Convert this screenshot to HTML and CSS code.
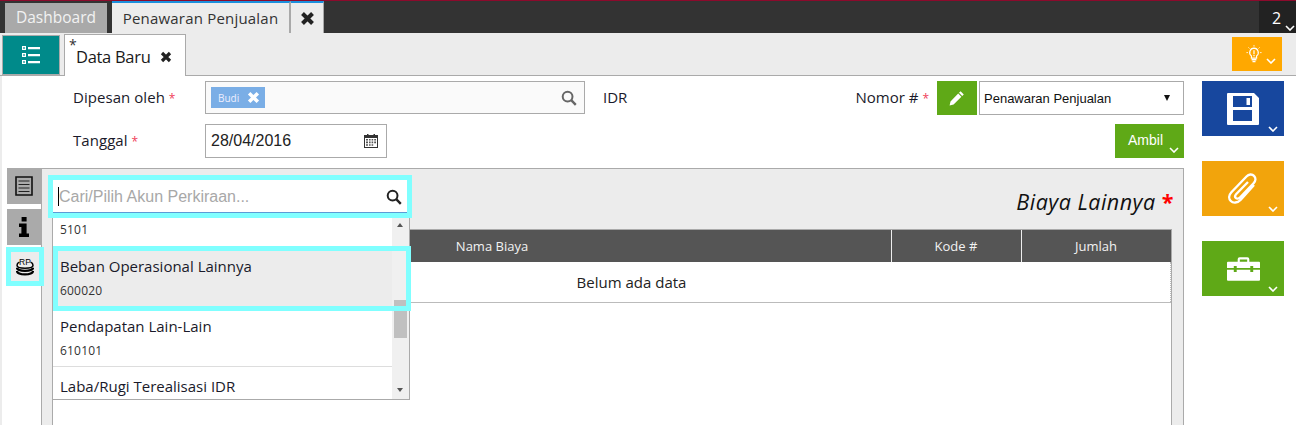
FILE: index.html
```html
<!DOCTYPE html>
<html lang="id">
<head>
<meta charset="utf-8">
<title>Penawaran Penjualan</title>
<link rel="stylesheet" href="styles.css">
</head>
<body>
<svg class="defs" aria-hidden="true">
  <symbol id="i-x" viewBox="0 0 12 12"><path d="M2 2l8 8M10 2l-8 8" fill="none" stroke="currentColor" stroke-width="3.2"/></symbol>
  <symbol id="i-chev" viewBox="0 0 10 6"><path d="M1 1l4 4 4-4" fill="none" stroke="currentColor" stroke-width="1.6"/></symbol>
  <symbol id="i-search" viewBox="0 0 16 16"><circle cx="6.6" cy="6.6" r="4.9" fill="none" stroke="currentColor" stroke-width="2"/><path d="M10.2 10.2l4.6 4.6" fill="none" stroke="currentColor" stroke-width="2.4"/></symbol>
</svg>
<div class="app">
  <header class="topbar">
    <div class="tab tab-dash">Dashboard</div>
    <div class="tab tab-open">Penawaran Penjualan</div>
    <div class="tab tab-close"><svg class="ic-x ic-x-lg"><use href="#i-x"/></svg></div>
    <div class="count">2<svg class="chev"><use href="#i-chev"/></svg></div>
  </header>
  <nav class="subbar">
    <button class="list-btn" type="button">
      <svg width="18" height="18" viewBox="0 0 18 18"><path d="M0 0h4v4H0zM0 7h4v4H0zM0 14h4v4H0z" fill="#fff"/><path d="M1.2 1.2h1.6v1.6H1.2zM1.2 8.2h1.6v1.6H1.2zM1.2 15.2h1.6v1.6H1.2z" fill="#008a8a"/><path d="M6 1h12v2.2H6zM6 8h12v2.2H6zM6 15h12v2.2H6z" fill="#fff"/></svg>
    </button>
    <div class="doc-tab"><span class="mark">*</span><span class="doc-name">Data Baru</span><svg class="ic-x"><use href="#i-x"/></svg></div>
    <button class="bulb-btn" type="button">
      <svg width="16" height="18" viewBox="0 0 16 18"><path d="M8 3.2a4.3 4.3 0 0 0-2.6 7.7v2.3h5.2v-2.3A4.3 4.3 0 0 0 8 3.2z" fill="none" stroke="#fff" stroke-width="1.2"/><path d="M7.4 5.2h1.2v4H7.4zM7.4 10h1.2v1.3H7.4zM5.6 14h4.8v1.4H5.6zM6.5 16h3v1.2h-3z" fill="#fff"/><path d="M8 0v1.6M2.4 2.4l1.1 1.1M13.6 2.4l-1.1 1.1M.4 7.6H2M14 7.6h1.6" stroke="#fff" stroke-width=".8"/></svg>
      <svg class="chev"><use href="#i-chev"/></svg>
    </button>
  </nav>
  <main class="body">
    <section class="work">
      <form class="form">
        <div class="row">
          <label class="lbl">Dipesan oleh <i>*</i></label>
          <div class="field field-who">
            <span class="tag">Budi<svg class="tag-x"><use href="#i-x"/></svg></span>
            <svg class="ic-search"><use href="#i-search"/></svg>
          </div>
          <span class="cur">IDR</span>
          <span class="lbl-no">Nomor # <i>*</i></span>
          <button class="pen-btn" type="button">
            <svg width="16" height="16" viewBox="0 0 16 16"><path d="M11.6 1.2l3.2 3.2-1.6 1.6L10 2.8zM9.2 3.6l3.2 3.2-7.8 7.8-4 .9.9-4z" fill="#fff"/></svg>
          </button>
          <div class="select">Penawaran Penjualan<span class="caret"></span></div>
        </div>
        <div class="row row-2">
          <label class="lbl">Tanggal <i>*</i></label>
          <div class="field field-date">28/04/2016
            <svg width="14" height="14" viewBox="0 0 14 14"><path d="M0 1h14v13H0z" fill="#333"/><path d="M1 4h12v9H1z" fill="#fff"/><path d="M3 0h1.5v2.5H3zM9.5 0H11v2.5H9.5z" fill="#333"/><path d="M2 5h2v1.6H2zM5 5h1.6v1.6H5zM7.6 5h1.6v1.6H7.6zM10.2 5H12v1.6h-1.8zM2 7.6h2v1.6H2zM5 7.6h1.6v1.6H5zM7.6 7.6h1.6v1.6H7.6zM10.2 7.6H12v1.6h-1.8zM2 10.2h2v1.6H2zM5 10.2h1.6v1.6H5zM7.6 10.2h1.6v1.6H7.6z" fill="#555"/></svg>
          </div>
          <button class="ambil" type="button">Ambil<svg class="chev"><use href="#i-chev"/></svg></button>
        </div>
      </form>
      <div class="area">
        <div class="vtabs">
          <div class="vtab">
            <svg width="18" height="20" viewBox="0 0 18 20"><path d="M1 1h16v18H1z" fill="none" stroke="#111" stroke-width="1.6"/><path d="M3.5 5h11M3.5 8.5h11M3.5 12h11M3.5 15.5h11" stroke="#222" stroke-width="1.2"/></svg>
          </div>
          <div class="vtab">
            <svg width="10" height="20" viewBox="0 0 10 20"><path d="M2.6 0h5v4.4h-5zM0 6.6h7.6v10H10V20H0v-3.4h2.4V10H0z" fill="#000"/></svg>
          </div>
          <div class="vtab vtab-on">
            <svg width="18" height="18" viewBox="0 0 18 18"><text class="rp" x="9" y="7" text-anchor="middle">RP</text><path d="M3.400 4.200C1.800 5 1 6 1 7.200c0 1.800 3.600 3 8 3s8-1.200 8-3c0-1.200-.8-2.200-2.400-3" fill="none" stroke="#000" stroke-width="1.500"/><path d="M1 9.800c0 1.800 3.600 3 8 3s8-1.200 8-3M1 13c0 2 3.600 3.400 8 3.400s8-1.400 8-3.400" fill="none" stroke="#000" stroke-width="2.300"/></svg>
          </div>
        </div>
        <div class="panel">
          <div class="panel-head"><h2 class="title">Biaya Lainnya <i>*</i></h2></div>
          <div class="sheet">
            <table class="grid">
              <colgroup><col class="c1"><col class="c2"><col class="c3"><col class="c4"></colgroup>
              <thead><tr><th></th><th>Nama Biaya</th><th>Kode #</th><th>Jumlah</th></tr></thead>
              <tbody><tr><td></td><td colspan="3">Belum ada data</td></tr></tbody>
            </table>
          </div>
        </div>
        <div class="picker">
          <div class="picker-input"><span class="cursor"></span><span class="ph">Cari/Pilih Akun Perkiraan...</span><svg class="ic-search"><use href="#i-search"/></svg></div>
          <div class="drop">
            <ul class="items">
              <li class="item item-cut"><small>5101</small></li>
              <li class="item item-on"><b>Beban Operasional Lainnya</b><small>600020</small></li>
              <li class="item item-line"><b>Pendapatan Lain-Lain</b><small>610101</small></li>
              <li class="item"><b>Laba/Rugi Terealisasi IDR</b></li>
            </ul>
            <div class="scroll"><span class="up"></span><span class="thumb"></span><span class="down"></span></div>
            <div class="hl"></div>
          </div>
        </div>
      </div>
    </section>
    <aside class="actions">
      <button class="act act-blue" type="button">
        <svg width="32" height="32" viewBox="0 0 32 32"><path fill-rule="evenodd" d="M1 0h26l5 5v26a1 1 0 0 1-1 1H1a1 1 0 0 1-1-1V1a1 1 0 0 1 1-1zM6 3v11h19V3zM6 17v11h19V17z" fill="#fff"/><path d="M19.500 5h3.500v7h-3.500z" fill="#fff"/></svg>
        <svg class="chev"><use href="#i-chev"/></svg>
      </button>
      <button class="act act-orange" type="button">
        <svg width="30" height="32" viewBox="0 0 30 32"><path d="M26 12L12.500 27c-3 3.200-7.500 3.300-9.700 1-2.400-2.400-2-6 .6-8.800L18.500 3.500c2.300-2.400 5.600-2.600 7.500-.6 2 2 1.800 5-.4 7.400L12 24.500c-1.400 1.400-3.200 1.500-4.200.5-1-1-.8-2.600.5-4L20 9" fill="none" stroke="#fff" stroke-width="2.400"/></svg>
        <svg class="chev"><use href="#i-chev"/></svg>
      </button>
      <button class="act act-green" type="button">
        <svg width="33" height="24" viewBox="0 0 34 24"><path d="M11 5V2a2 2 0 0 1 2-2h8a2 2 0 0 1 2 2v3h-2.200V2.200h-7.600V5z" fill="#fff"/><path d="M1 4.500h32a1 1 0 0 1 1 1V11H27V9h-3v2H10V9H7v2H0V5.500a1 1 0 0 1 1-1zM0 12.800h7V15h3v-2.200h14V15h3v-2.200h7V23a1 1 0 0 1-1 1H1a1 1 0 0 1-1-1z" fill="#fff"/></svg>
        <svg class="chev"><use href="#i-chev"/></svg>
      </button>
    </aside>
  </main>
</div>
</body>
</html>
```
FILE: styles.css
```css
* { box-sizing: border-box; }
html, body { margin: 0; height: 100%; background: #fff; overflow: hidden; }
body { font-family: "Open Sans", "Liberation Sans", sans-serif; color: #1a1a2a; }
.defs { position: absolute; width: 0; height: 0; }
button { font: inherit; border: 0; padding: 0; cursor: pointer; }
i { font-style: normal; }

.app { width: 1296px; height: 425px; display: flex; flex-direction: column; overflow: hidden; }

.chev { position: absolute; width: 10px; height: 6px; color: #fff; }
.ic-x { width: 12px; height: 12px; color: #222; }
.ic-x-lg { width: 15px; height: 15px; }

/* top bar */
.topbar { flex: 0 0 33px; display: flex; align-items: flex-end; background: #333; border-top: 1px solid #8c0a2c; padding-left: 5px; }
.tab { height: 30px; display: flex; align-items: center; font-size: 15px; }
.tab-dash { width: 102px; justify-content: center; background: #a9a9a9; color: #f2f2f2; margin-right: 5px; font-size: 15.500px; padding-bottom: 2px; }
.tab-open { width: 179px; height: 32px; justify-content: center; background: #ececec; border-top: 2px solid #1c8fdc; border-right: 2px solid #a9a9a9; color: #333; letter-spacing: .2px; }
.tab-close { width: 33px; height: 32px; justify-content: center; background: #ececec; border-top: 2px solid #1c8fdc; border-right: 1px solid #a9a9a9; }
.count { position: relative; margin-left: auto; width: 37px; height: 32px; background: #222; color: #fff; font-size: 16px; line-height: 22px; padding: 6px 0 0 13px; }
.count .chev { left: 26px; bottom: 2px; }

/* second bar */
.subbar { flex: 0 0 43px; display: flex; align-items: flex-end; background: #ececec; border-bottom: 1px solid #aaa; padding-left: 2px; position: relative; }
.list-btn { width: 58px; height: 41px; margin-bottom: -1px; background: #008a8a; border: 1px solid #aaa; border-bottom-width: 2px; display: flex; align-items: center; justify-content: center; }
.doc-tab { position: relative; width: 122px; height: 42px; margin: 0 0 -1px 4px; background: #fff; border: 1px solid #aaa; border-bottom: 0; display: flex; align-items: center; padding: 2px 0 0 11px; }
.mark { position: absolute; left: 4px; top: 0; font-size: 14px; color: #333; }
.doc-name { font-size: 16.500px; letter-spacing: -.3px; color: #1a1a1a; margin-right: 10px; }
.bulb-btn { position: relative; margin: 0 14px 4px auto; width: 50px; height: 34px; background: #ffa800; display: flex; align-items: center; padding-left: 14px; }
.bulb-btn .chev { left: 34px; bottom: 7px; }

/* body */
.body { flex: 1; display: flex; border-left: 2px solid #ececec; min-height: 0; }
.work { width: 1182px; display: flex; flex-direction: column; }
.form { padding: 5px 0 0 71px; }
.row { display: flex; align-items: center; height: 34px; }
.row-2 { margin-top: 9px; }
.lbl { width: 132px; font-size: 15px; letter-spacing: .05px; padding-bottom: 2px; }
.lbl i, .lbl-no i { color: #f0405a; font-size: 12px; }
.field { display: flex; align-items: center; height: 34px; border: 1px solid #aaa; }
.field-who { width: 380px; height: 33px; align-self: flex-start; background: #fafafa; padding: 0 7px 0 5px; justify-content: space-between; }
.tag { display: flex; align-items: center; width: 54px; height: 21px; background: #7aaee6; color: #eef; font-size: 10px; padding-left: 7px; }
.tag-x { width: 13px; height: 13px; margin-left: 8px; color: #fff; }
.ic-search { width: 16px; height: 16px; color: #666; }
.cur { margin-left: 18px; font-size: 15px; padding-bottom: 2px; }
.lbl-no { margin-left: auto; font-size: 15px; padding-bottom: 2px; margin-right: 8px; }
.pen-btn { width: 40px; height: 34px; background: #5fa917; display: flex; align-items: center; justify-content: center; }
.select { position: relative; width: 205px; height: 34px; margin-left: 2px; border: 1px solid #aaa; background: #fff; color: #111; font: 13px/33px "Liberation Sans", sans-serif; padding-left: 4px; }
.caret { position: absolute; right: 13px; top: 13px; border: 3.500px solid transparent; border-top: 6px solid #111; border-bottom: 0; }
.field-date { width: 182px; padding: 0 8px 0 5px; justify-content: space-between; font: 16px "Liberation Sans", sans-serif; color: #222; }
.ambil { position: relative; margin-left: auto; width: 69px; height: 34px; background: #5fa917; color: #fff; font: 14px "Liberation Sans", sans-serif; text-align: left; padding: 0 0 2px 13px; }
.ambil .chev { right: 5px; bottom: 5px; }

/* panel */
.area { position: relative; flex: 1; min-height: 0; display: flex; margin-top: 10px; padding-left: 5px; }
.vtabs { width: 34px; display: flex; flex-direction: column; }
.vtab { height: 36px; background: #aaa; display: flex; align-items: center; justify-content: center; margin-bottom: 5px; }
.vtab-on { position: relative; height: 29px; width: 28px; margin: 2px 0 0 4px; background: #ececec; outline: 5px solid #80ffff; z-index: 2; }
.panel { flex: 1; display: flex; flex-direction: column; background: #ececec; border: 1px solid #aaa; border-bottom: 0; padding: 0 11px 0 10px; }
.panel-head { flex: 0 0 60px; display: flex; align-items: center; justify-content: flex-end; margin-right: -11px; padding: 5px 9px 0 0; }
.title { margin: 0; font-size: 21.500px; font-style: italic; font-weight: 400; color: #111; letter-spacing: .5px; }
.title i { color: #f00; font-size: 21.500px; font-weight: 700; }
.sheet { flex: 1; background: #fff; border: 1px solid #aaa; border-bottom: 0; }
.grid { width: 100%; border-collapse: collapse; table-layout: fixed; font-size: 13px; }
.c1 { width: 40px; } .c2 { width: 798px; } .c3 { width: 130px; }
.grid th { height: 32px; background: #555; color: #f2f2f2; font-weight: 400; font-size: 13px; padding: 0; border-right: 1px solid #eee; }
.grid th:last-child { border-right: 0; }
.grid td { height: 40px; text-align: center; border-bottom: 1px solid #bbb; color: #222; font-size: 15px; padding: 0; }
.grid tbody tr td:last-child { border-right: 1px dotted #bbb; }

/* account picker, floats over the panel */
.picker { position: absolute; left: 46px; top: 7px; width: 364px; z-index: 3; }
.picker-input { height: 43px; display: flex; align-items: center; background: #fff; border: 5px solid #80ffff; box-shadow: inset 0 -1px 0 #5b9bd5; padding: 0 5px 0 5px; font: 16px "Liberation Sans", sans-serif; }
.cursor { width: 1px; height: 19px; background: #000; }
.ph { flex: 1; color: #a8a8a8; }
.picker-input .ic-search { color: #222; }
.drop { position: relative; display: flex; width: 358px; height: 182px; margin-left: 4px; background: #fff; border: 1px solid #aaa; border-top: 0; }
.items { list-style: none; flex: 1; margin: 0; padding: 0; overflow: hidden; }
.item { height: 60px; padding: 6px 7px 0 7px; font-size: 15px; }
.item b { display: block; font-weight: 400; letter-spacing: 0; line-height: 26px; color: #1a1a2a; }
.item small { display: block; font-size: 12px; line-height: 24px; letter-spacing: .2px; color: #333; }
.item-cut { height: 29px; padding-top: 0; }
.item-on { background: #ececec; }
.item-line { border-bottom: 1px solid #ddd; }
.scroll { position: relative; width: 17px; background: #f0f0f0; }
.up, .down { position: absolute; left: 5px; border: 3.500px solid transparent; }
.up { top: 5px; border-bottom: 4px solid #555; border-top: 0; }
.down { bottom: 7px; border-top: 4px solid #555; border-bottom: 0; }
.thumb { position: absolute; left: 2px; top: 82px; width: 13px; height: 38px; background: #c0c0c0; }
.hl { position: absolute; left: 0; top: 28px; width: 358px; height: 65px; border: 5px solid #80ffff; pointer-events: none; }

/* right column */
.actions { width: 82px; margin: 5px 0 0 18px; display: flex; flex-direction: column; gap: 25px; }
.act { position: relative; width: 82px; height: 55px; display: flex; align-items: center; justify-content: center; }
.act .chev { right: 6px; bottom: 4px; }
.act-blue { background: #17479e; }
.act-orange { background: #f2a40c; }
.act-green { background: #5fa917; }
.rp { font: 8.500px "Liberation Sans", sans-serif; fill: #000; }
```
